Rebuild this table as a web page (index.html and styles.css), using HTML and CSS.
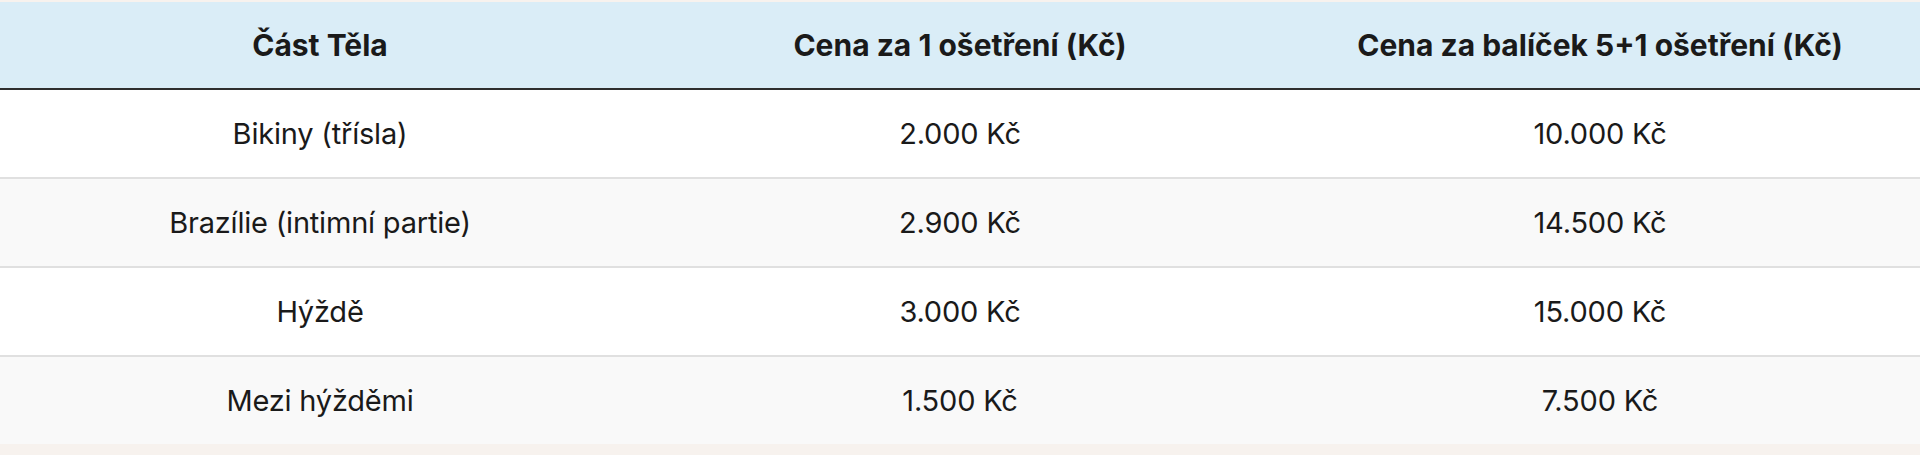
FILE: index.html
```html
<!DOCTYPE html>
<html lang="cs">
<head>
<meta charset="utf-8">
<title>Ceník</title>
<link rel="stylesheet" href="styles.css">
</head>
<body>
<div class="page">
  <table class="price-table">
    <thead>
      <tr>
        <th>Část Těla</th>
        <th>Cena za 1 ošetření (Kč)</th>
        <th>Cena za balíček 5+1 ošetření (Kč)</th>
      </tr>
    </thead>
    <tbody>
      <tr>
        <td>Bikiny (třísla)</td>
        <td>2.000 Kč</td>
        <td>10.000 Kč</td>
      </tr>
      <tr>
        <td>Brazílie (intimní partie)</td>
        <td>2.900 Kč</td>
        <td>14.500 Kč</td>
      </tr>
      <tr>
        <td>Hýždě</td>
        <td>3.000 Kč</td>
        <td>15.000 Kč</td>
      </tr>
      <tr>
        <td>Mezi hýžděmi</td>
        <td>1.500 Kč</td>
        <td>7.500 Kč</td>
      </tr>
    </tbody>
  </table>
</div>
</body>
</html>
```

FILE: styles.css
```css
html, body {
  margin: 0;
  padding: 0;
  background: #f7f2ee;
}
.page {
  padding-top: 2px;
}
.price-table {
  width: 100%;
  border-collapse: collapse;
  table-layout: fixed;
  font-family: Inter, "Noto Sans", sans-serif;
  color: #1a1a1a;
}
.price-table th,
.price-table td {
  text-align: center;
  vertical-align: middle;
  padding: 0 10px;
}
.price-table th {
  background: #daedf7;
  height: 86px;
  font-size: 30px;
  font-weight: 700;
  border-bottom: 2px solid #2e2e2e;
}
.price-table td {
  height: 87px;
  font-size: 29px;
  font-weight: 400;
  letter-spacing: -0.2px;
  border-bottom: 2px solid #e0e0e0;
}
.price-table tbody tr:nth-child(odd) td {
  background: #ffffff;
}
.price-table tbody tr:nth-child(even) td {
  background: #f9f9f9;
}
.price-table tbody tr:last-child td {
  border-bottom: none;
}
```
